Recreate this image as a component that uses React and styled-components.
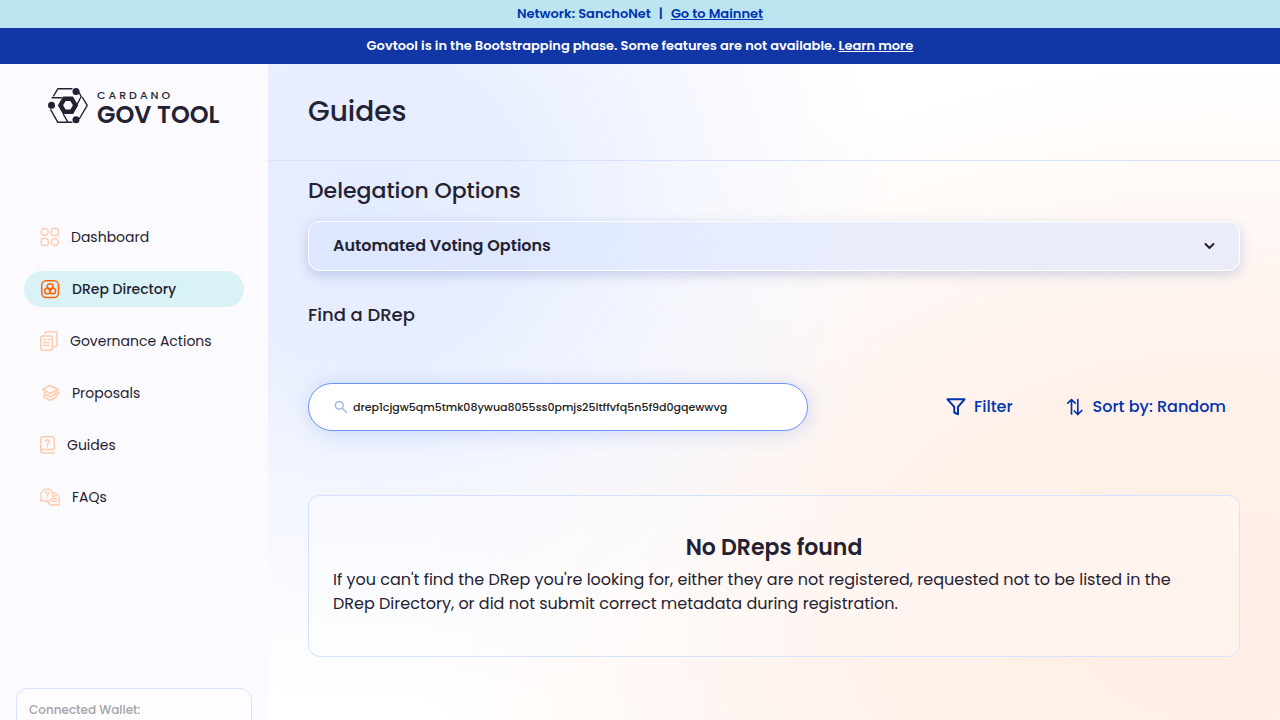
import React from "react";
import styled, { createGlobalStyle, css } from "styled-components";

const GlobalStyle = createGlobalStyle`
  *, *::before, *::after { box-sizing: border-box; }
  body {
    margin: 0;
    color: #242232;
    background: #fff;
    font-family: Poppins, Inter, "Open Sans", sans-serif;
    font-size: 16px;
    line-height: 24px;
  }
  h1, h2, h3, p { margin: 0; }
  button, input { font: inherit; color: inherit; }
`;

const Page = styled.div`
  display: flex;
  flex-direction: column;
  height: 100vh;
`;

const Banner = styled.div`
  flex: none;
  display: flex;
  align-items: center;
  justify-content: center;
  gap: ${(p) => (p.$phase ? 3 : 8)}px;
  padding: ${(p) => (p.$phase ? 8 : 4)}px 16px;
  font-size: 13px;
  line-height: 20px;
  font-weight: 600;
  color: ${(p) => (p.$phase ? "#fff" : "#0033ad")};
  background: ${(p) => (p.$phase ? "#1137a7" : "#bce4f1")};
`;

const BannerLink = styled.a`
  color: inherit;
  text-decoration-thickness: 1px;
  text-underline-offset: 1px;
`;

const Shell = styled.div`
  flex: 1;
  min-height: 0;
  display: flex;
`;

const Sidebar = styled.aside`
  flex: none;
  width: 268px;
  display: flex;
  flex-direction: column;
  overflow-y: auto;
  scrollbar-width: none;
  background: #fbfaff;
`;

const Brand = styled.a`
  display: flex;
  align-items: flex-start;
  gap: 9px;
  padding: 24px 16px 0 48px;
  color: #242232;
  text-decoration: none;
`;

const BrandText = styled.span`
  display: flex;
  flex-direction: column;
`;

const BrandTop = styled.span`
  font-size: 11px;
  line-height: 14px;
  font-weight: 500;
  letter-spacing: 3px;
`;

const BrandName = styled.span`
  font-size: 24px;
  line-height: 26px;
  font-weight: 600;
  white-space: nowrap;
`;

const Nav = styled.nav`
  flex: none;
  display: flex;
  flex-direction: column;
  gap: 16px;
  padding: 91px 24px 173px;
`;

const NavItem = styled.a`
  display: flex;
  align-items: center;
  gap: 12px;
  height: 36px;
  padding: 0 16px;
  border-radius: 18px;
  font-size: 14px;
  line-height: 20px;
  white-space: nowrap;
  color: #242232;
  text-decoration: none;
  svg { color: #ffcbad; }
  ${(p) =>
    p.$active &&
    css`
      font-weight: 500;
      background: #d8f2f6;
      svg { color: #ff640a; }
    `}
`;

const WalletCard = styled.section`
  flex: none;
  height: 120px;
  margin: 0 16px 16px;
  padding: 11px 12px;
  border: 1px solid #d6e2ff;
  border-radius: 12px;
  background: #fdfdff;
  font-size: 12px;
  line-height: 20px;
  font-weight: 500;
  color: #a4a4a8;
`;

const Main = styled.main`
  flex: 1;
  min-width: 0;
  overflow-y: auto;
  scrollbar-width: none;
  background:
    radial-gradient(ellipse 52% 78% at 10% 22%, #e3ebff 0%, #e6edffe6 30%, #eff3ffa0 62%, #ffffff00 100%),
    radial-gradient(ellipse 80% 86% at 94% 84%, #ffeee5 0%, #fff1ea 42%, #fff6f2 62%, #fffdfa00 100%),
    #fffffe;
`;

const Header = styled.header`
  padding: 28px 40px;
  border-bottom: 1px solid #d6e2ff;
`;

const PageTitle = styled.h1`
  font-size: 28px;
  line-height: 40px;
  font-weight: 500;
`;

const Content = styled.div`
  padding: 12px 40px 40px;
`;

const SectionTitle = styled.h2`
  font-size: 22px;
  line-height: 36px;
  font-weight: 500;
`;

const Accordion = styled.button`
  display: flex;
  align-items: center;
  justify-content: space-between;
  width: 100%;
  height: 50px;
  margin-top: 12px;
  padding: 0 24px;
  border: 1px solid #fff;
  border-radius: 12px;
  background: rgba(214, 226, 255, 0.5);
  box-shadow: 0 4px 12px rgba(47, 63, 160, 0.22);
  font-weight: 600;
  text-align: left;
`;

const FindTitle = styled.h2`
  margin-top: 32px;
  font-size: 18px;
  line-height: 24px;
  font-weight: 500;
`;

const Toolbar = styled.div`
  display: flex;
  align-items: center;
  justify-content: space-between;
  gap: 24px;
  margin-top: 56px;
`;

const SearchBox = styled.label`
  flex: 0 1 500px;
  display: flex;
  align-items: center;
  gap: 4px;
  height: 48px;
  padding: 0 24px;
  border: 1px solid #6b95fb;
  border-radius: 24px;
  background: #fff;
  box-shadow: 2px 2px 20px rgba(47, 98, 220, 0.2);
  svg { color: #a3b6e6; }
`;

const SearchInput = styled.input`
  flex: 1;
  min-width: 0;
  padding: 0;
  border: 0;
  outline: 0;
  background: none;
  font-size: 11px;
  line-height: 16px;
  font-weight: 500;
  color: #212121;
`;

const Actions = styled.div`
  display: flex;
  gap: 52px;
  padding-right: 14px;
`;

const Action = styled.button`
  display: flex;
  align-items: center;
  gap: 8px;
  padding: 0;
  border: 0;
  background: none;
  font-weight: 500;
  white-space: nowrap;
  color: #0033ad;
`;

const EmptyCard = styled.section`
  margin-top: 64px;
  padding: 36px 24px 40px;
  border: 1px solid #d6e2ff;
  border-radius: 12px;
  background: rgba(255, 255, 255, 0.3);
`;

const EmptyTitle = styled.h3`
  margin-bottom: 4px;
  font-size: 22px;
  line-height: 32px;
  font-weight: 600;
  text-align: center;
`;

const Icon = styled.svg.attrs({ fill: "none", stroke: "currentColor", "aria-hidden": true })`
  flex: none;
  display: block;
  stroke-linecap: round;
  stroke-linejoin: round;
`;

const LogoMark = () => (
  <Icon width="40" height="36" viewBox="0 0 40 36" strokeWidth="1.4" strokeLinecap="butt">
    <path d="M5.500 8 9.800.800H24M31 4.500 33.200 8.500 28.500 17.500M4 9.800H13.500M34.500 9.500 39.200 17.300 31.500 30.500M24 34.300H9.800L2.800 21.800M15.500 26.500 20 34.300" />
    <path d="m15.300 9.300h9.400l4.600 8-4.600 8h-9.400l-4.600-8z" fill="currentColor" />
    <path d="m17.600 13h4.800l2.500 4.300-2.500 4.300h-4.800l-2.500-4.300z" fill="#fbfaff" stroke="none" />
    <g fill="currentColor" stroke="none">
      <circle cx="28" cy="3.500" r="3.500" />
      <circle cx="3.500" cy="17.300" r="3.500" />
      <circle cx="28" cy="31.800" r="3.500" />
    </g>
  </Icon>
);

const DashboardIcon = () => (
  <Icon width="19" height="20" viewBox="0 0 19 20" strokeWidth="1.4">
    <circle cx="4.700" cy="5" r="3.500" />
    <rect x="11.300" y="1.500" width="7" height="7" rx="2" />
    <rect x="1.200" y="11.500" width="7" height="7" rx="2" />
    <circle cx="14.800" cy="15" r="3.500" />
  </Icon>
);

const DRepIcon = () => (
  <Icon width="20" height="20" viewBox="0 0 20 20" strokeWidth="1.5">
    <rect x="1.700" y="1.700" width="16.800" height="16.800" rx="4.500" />
    <circle cx="10.100" cy="7.600" r="2.900" />
    <circle cx="7.500" cy="11.900" r="2.900" />
    <circle cx="12.700" cy="11.900" r="2.900" />
  </Icon>
);

const GovernanceIcon = () => (
  <Icon width="18" height="20" viewBox="0 0 18 20" strokeWidth="1.5">
    <rect x=".8" y="5" width="11.500" height="14.200" rx="2" />
    <path d="M5 2.500Q5.200.8 7 .8h8q2 0 2 2v11q0 2-2.300 2M3.800 8.500h2M8.300 8.500h1.500M3.800 11.500h5.500M3.800 14.500h5.500" />
  </Icon>
);

const ProposalsIcon = () => (
  <Icon width="20" height="20" viewBox="0 0 20 20" strokeWidth="1.5">
    <path d="m2.500 6.500 7.700-4 8 4-8 4z" />
    <path d="M18.200 6.500v5.300M4.300 9.200v5l5.900 3.300 5.900-3.300v-5M4.300 10.500l5.900 3.300 5.900-3.300" />
  </Icon>
);

const GuidesIcon = () => (
  <Icon width="15" height="18" viewBox="0 0 15 18" strokeWidth="1.500">
    <path d="M14 17H3Q.8 17 .8 15V2.500Q.8.800 2.500.800H12.700Q14.200.800 14.200 2.300V13.500H2.500Q.8 13.500.8 15M5.500 5.500Q5.500 4 7.400 4T9.300 5.500Q9.200 6.600 7.400 7.800v.6M7.400 10.600v.1" />
  </Icon>
);

const FaqIcon = () => (
  <Icon width="20" height="18" viewBox="0 0 20 18" strokeWidth="1.400">
    <path d="M.8 13 1.500 9.700A6.100 6.100 0 1 1 4.300 12.600zM5.200 5.300Q5.300 3.900 7 3.900t1.700 1.400Q8.700 6.300 7 7.400v.5M7 9.900v.1" />
    <path d="M14 4.900A6 6 0 0 1 18.700 13.600L19.200 17.200 16.300 16.400A6.200 6.200 0 0 1 8 14.300M14.500 8h1.500M13.500 10.700h3M12 13.300h4.500" />
  </Icon>
);

const NAV = [
  { label: "Dashboard", icon: DashboardIcon },
  { label: "DRep Directory", icon: DRepIcon, active: true },
  { label: "Governance Actions", icon: GovernanceIcon },
  { label: "Proposals", icon: ProposalsIcon },
  { label: "Guides", icon: GuidesIcon },
  { label: "FAQs", icon: FaqIcon },
];

export default function App() {
  return (
    <Page>
      <GlobalStyle />
      <Banner>
        <span>Network: SanchoNet</span>
        <span>|</span>
        <BannerLink href="#mainnet">Go to Mainnet</BannerLink>
      </Banner>
      <Banner $phase>
        <span>Govtool is in the Bootstrapping phase. Some features are not available.</span>
        <BannerLink href="#learn">Learn more</BannerLink>
      </Banner>
      <Shell>
        <Sidebar>
          <Brand href="#home">
            <LogoMark />
            <BrandText>
              <BrandTop>CARDANO</BrandTop>
              <BrandName>GOV TOOL</BrandName>
            </BrandText>
          </Brand>
          <Nav aria-label="Main">
            {NAV.map(({ label, icon: Glyph, active }) => (
              <NavItem key={label} href="#nav" $active={active} aria-current={active ? "page" : undefined}>
                <Glyph />
                {label}
              </NavItem>
            ))}
          </Nav>
          <WalletCard>Connected Wallet:</WalletCard>
        </Sidebar>
        <Main>
          <Header>
            <PageTitle>Guides</PageTitle>
          </Header>
          <Content>
            <SectionTitle>Delegation Options</SectionTitle>
            <Accordion type="button" aria-expanded="false">
              Automated Voting Options
              <Icon width="12" height="8" viewBox="0 0 12 8" strokeWidth="2">
                <path d="m2.500 2 4 4 4-4" />
              </Icon>
            </Accordion>
            <FindTitle>Find a DRep</FindTitle>
            <Toolbar>
              <SearchBox>
                <Icon width="16" height="16" viewBox="0 0 16 16" strokeWidth="1.5">
                  <circle cx="6.300" cy="6.300" r="3.900" />
                  <path d="m9.500 9.500 4 4" />
                </Icon>
                <SearchInput
                  type="text"
                  aria-label="Search DReps"
                  defaultValue="drep1cjgw5qm5tmk08ywua8055ss0pmjs25ltffvfq5n5f9d0gqewwvg"
                />
              </SearchBox>
              <Actions>
                <Action type="button">
                  <Icon width="20" height="20" viewBox="0 0 20 20" strokeWidth="2">
                    <path d="M1.500 2.300H18.500L12 9.800v7.500L8.300 15.500V9.800z" />
                  </Icon>
                  Filter
                </Action>
                <Action type="button">
                  <Icon width="20" height="20" viewBox="0 0 20 20" strokeWidth="1.700">
                    <path d="M6.500 17V2.500M2.800 6.200l3.700-3.700 3.700 3.700M12.800 2.500v15M9.300 14l3.500 3.500 4-4" />
                  </Icon>
                  Sort by: Random
                </Action>
              </Actions>
            </Toolbar>
            <EmptyCard>
              <EmptyTitle>No DReps found</EmptyTitle>
              <p>
                If you can't find the DRep you're looking for, either they are not registered, requested not to be
                listed in the DRep Directory, or did not submit correct metadata during registration.
              </p>
            </EmptyCard>
          </Content>
        </Main>
      </Shell>
    </Page>
  );
}
